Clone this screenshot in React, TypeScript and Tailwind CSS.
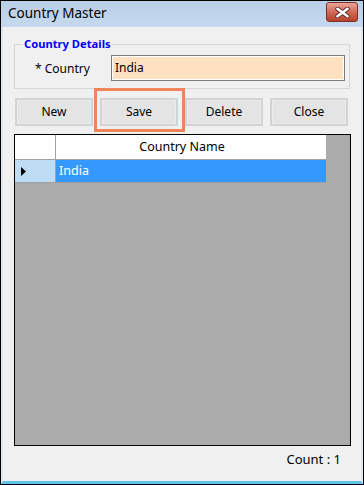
import React from 'react';

const font = { fontFamily: '"Noto Sans", "Open Sans", sans-serif' };

function CloseGlyph() {
  return (
    <svg width="15" height="11" viewBox="0 0 15 11">
      <path d="M2.5 1.8 L12.5 9.2 M12.5 1.8 L2.5 9.2" stroke="#5a2a22" strokeWidth="4.4" strokeLinecap="round" />
      <path d="M2.5 1.8 L12.5 9.2 M12.5 1.8 L2.5 9.2" stroke="#ffffff" strokeWidth="2.6" strokeLinecap="round" />
    </svg>
  );
}

function WinButton({ label }: { label: string }) {
  return (
    <button className="w-[78px] h-[28px] border-2 border-[#d3d3d3] bg-[#e4e4e4] shadow-[inset_0_0_0_1px_#ececec] text-[12px] text-black">
      {label}
    </button>
  );
}

export default function App() {
  return (
    <div className="w-[364px] h-[485px] border border-black bg-[#f0f0f0] flex flex-col text-black" style={font}>
      {/* title bar */}
      <div className="h-[26px] shrink-0 flex items-center justify-between pl-[7px] pr-[5px] bg-gradient-to-b from-[#b9cfe8] to-[#c6d9ee]">
        <span className="text-[13.5px] leading-none">Country Master</span>
        <div className="w-[32px] h-[20px] -mt-[4px] rounded-[3px] border border-[#7c3126] bg-gradient-to-b from-[#e8a598] via-[#d06a57] to-[#b8402d] flex items-center justify-center">
          <CloseGlyph />
        </div>
      </div>

      {/* body */}
      <div className="flex-1 relative flex flex-col border-x-2 border-x-[#dbe6f1] border-b-[3px] border-b-[#62c3e6] pt-[17px] px-[11px]">
        {/* group box */}
        <div className="relative h-[45px] border border-[#d6d6d6] flex items-start pt-[10px] pr-[4px]">
          <span className="absolute -top-[9px] left-[8px] px-[1px] bg-[#f0f0f0] text-[11.2px] font-bold text-[#0000ff] leading-[16px]">
            Country Details
          </span>
          <span className="w-[96px] pl-[20px] pt-[6px] text-[12px] leading-[16px] shrink-0">* Country</span>
          <div className="flex-1 h-[26px] border border-[#7a7a7a] bg-[#ffe0c1] shadow-[inset_0_0_0_1px_#ffffff] flex items-center pl-[3px] text-[12px]">
            India
          </div>
        </div>

        {/* buttons */}
        <div className="mt-[9px] ml-[1px] flex gap-[7px]">
          <WinButton label="New" />
          <WinButton label="Save" />
          <WinButton label="Delete" />
          <WinButton label="Close" />
        </div>

        {/* highlight around Save */}
        <div className="absolute top-[61px] left-[91px] w-[91px] h-[44px] border-[3px] border-[#f2845d] pointer-events-none" />

        {/* grid */}
        <div className="mt-[8px] w-[337px] h-[312px] border border-black bg-[#ababab] flex flex-col">
          <div className="flex h-[25px]">
            <div className="w-[41px] h-full bg-white border-r border-b border-[#a0a0a0]" />
            <div className="w-[270px] h-full bg-white border-b border-[#a0a0a0] flex items-center justify-center pr-[18px] text-[12.5px]">
              Country Name
            </div>
          </div>
          <div className="flex h-[23px]">
            <div className="w-[41px] h-full bg-[#bedcf4] border-r border-b border-[#a0a0a0] flex items-center pl-[6px]">
              <svg width="5" height="9" viewBox="0 0 5 9">
                <path d="M0 0 L5 4.5 L0 9 Z" fill="#000" />
              </svg>
            </div>
            <div className="w-[270px] h-full bg-[#3399ff] border-b border-[#a0a0a0] flex items-center pl-[3px] text-[12.5px] text-white">
              India
            </div>
          </div>
        </div>

        {/* count */}
        <div className="mt-[5px] mr-[9px] self-end text-[13px] leading-[16px]">Count : 1</div>
      </div>
    </div>
  );
}
